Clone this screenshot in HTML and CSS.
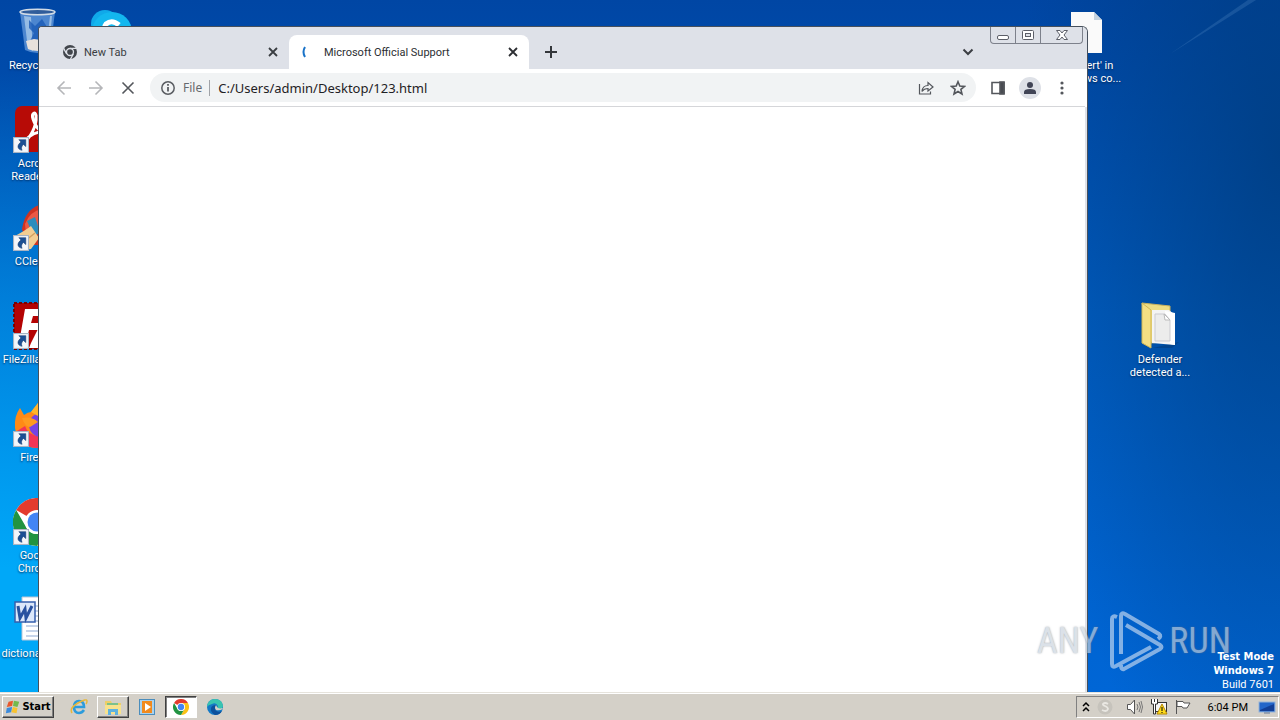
FILE: index.html
```html
<!DOCTYPE html>
<html lang="en">
<head>
<meta charset="utf-8">
<title>Desktop</title>
<link rel="stylesheet" href="styles.css">
</head>
<body>
<svg class="defs" width="0" height="0" aria-hidden="true">
  <defs>
    <symbol id="shortcut" viewBox="0 0 15 15"><rect x=".5" y=".5" width="14" height="14" fill="#f4f6fa" stroke="#a9b4c4"/><path d="M5.500 2.500H12V9L9.800 7C8 8.500 7.500 10.500 8.500 12.500 4.500 12 2.800 8 7.500 4.800z" fill="#1c4f94" stroke="#123a72" stroke-width=".5"/></symbol>
    <symbol id="chrome" viewBox="0 0 48 48"><circle cx="24" cy="24" r="24" fill="#fff"/><path d="M24 24 3.200 12A24 24 0 0 1 44.800 12H24z" fill="#e33b2e"/><path d="M24 12h20.800A24 24 0 0 1 24 48l10.400-18z" fill="#fbc116"/><path d="M3.200 12A24 24 0 0 0 24 48l10.400-18A12 12 0 0 1 13.600 30z" fill="#229342"/><circle cx="24" cy="24" r="12" fill="#fff"/><circle cx="24" cy="24" r="9.500" fill="#4285f4"/></symbol>
    <symbol id="close" viewBox="0 0 16 16"><path d="m4 4 8 8m0-8-8 8" stroke="currentColor" stroke-width="1.800" fill="none"/></symbol>
  </defs>
</svg>
<div class="screen">
  <main class="desktop">
    <svg class="rays" viewBox="0 0 200 130" aria-hidden="true"><path d="M90 54 168 0h8z" fill="#8fc3ee" opacity=".16"/></svg>
    <div class="icons">
      <div class="item"><svg class="pic" viewBox="0 0 48 48"><path d="m7 4 5 38q12 6 25 0l5-38z" fill="#4c86cf"/><path d="m11 8 4 33 5 2-2-34zM37 8l-4 34 3-1 3-33z" fill="#a9c9e8" opacity=".8"/><path d="m16 12 6 6 7-7 5 8-7 6 5 8H17l4-8-5-5z" fill="#1557b4" opacity=".75"/><path d="m13 33 8-2 7 1 8-1-2 10q-9 4-19 0z" fill="#e7e1dc"/><ellipse cx="24.500" cy="4" rx="17.500" ry="2.800" fill="#305d9b" stroke="#d2dce6" stroke-width="1.500"/></svg><span class="label">Recycle Bin</span></div>
      <div class="item"><svg class="pic" viewBox="0 0 48 48"><rect x="2" width="45" height="46" rx="7" fill="#b70b06"/><path d="M12 35c5-3 12-15 11-25 0-5-5-3-3 3 3 9 9 15 17 16 5 0 3-5-4-4-8 0-17 4-21 10z" fill="none" stroke="#fff" stroke-width="3"/><use href="#shortcut" y="31" width="16" height="16"/></svg><span class="label">Acrobat<br>Reader DC</span></div>
      <div class="item"><svg class="pic" viewBox="0 0 48 48"><path d="M9 25Q12 6 26 1h16v40H14z" fill="#cf3321"/><path d="M12 20Q17 7 29 5v14L13 30z" fill="#eb5945"/><path d="m14 17 8-4 5 15-6 5z" fill="#2b8dbd"/><path d="M2 32Q13 26 18 22l8 12-8 11q-10 2-16-9z" fill="#f2cd92"/><path d="m12 37 10-8" stroke="#d0a060" stroke-width="1.500"/><use href="#shortcut" y="31" width="16" height="16"/></svg><span class="label">CCleaner</span></div>
      <div class="item"><svg class="pic" viewBox="0 0 48 48"><rect x="1" y="1" width="46" height="46" fill="#b40303"/><rect x="1" y="1" width="46" height="46" fill="none" stroke="#790000" stroke-width="2" stroke-dasharray="3 2"/><path d="M12 7h28l-2 7H20l-2 7h10l-2 7H16l-3 13H6z" fill="#fff"/><path d="M26 25h20L27 41h15l-2 5H16l2-5z" fill="#fff"/><use href="#shortcut" y="31" width="16" height="16"/></svg><span class="label">FileZilla Client</span></div>
      <div class="item"><svg class="pic" viewBox="0 0 48 48"><path d="M2 28Q1 16 7 8l4 7q4-3 7-3l7-9 22 10v22Q42 48 25 48 5 48 2 28z" fill="#ff8a16"/><path d="M4 31q4 17 21 17h10V35q-19 4-23-9z" fill="#f23556"/><circle cx="28" cy="25" r="12" fill="#7542e5"/><path d="M9 18q10-2 16 4l-8 5q-5 0-8-9z" fill="#ff9a1f"/><path d="m18 12 7-9v13z" fill="#ffb52c"/><use href="#shortcut" y="31" width="16" height="16"/></svg><span class="label">Firefox</span></div>
      <div class="item"><svg class="pic" viewBox="0 0 48 48"><use href="#chrome" width="48" height="48"/><use href="#shortcut" y="31" width="16" height="16"/></svg><span class="label">Google<br>Chrome</span></div>
      <div class="item"><svg class="pic" viewBox="0 0 48 48"><path d="M9 1h31v43H9z" fill="#fff" stroke="#b9c6d7"/><path d="M13 10h22M13 15h22M13 20h22M13 25h22M13 30h22M13 35h22M13 40h22" stroke="#8da9d3"/><rect x="2" y="6" width="20" height="20" fill="#dce8fa" stroke="#365fac" stroke-width="1.500"/><path d="m5 10 2 12 5-9 1 9 6-12" stroke="#2852a0" stroke-width="3" fill="none"/></svg><span class="label">dictionarywe...</span></div>
    </div>
    <svg class="skype" viewBox="0 0 48 48" aria-hidden="true"><circle cx="16" cy="16" r="14" fill="#10a9e9"/><circle cx="23" cy="24" r="20" fill="#13b7ef"/><circle cx="32" cy="32" r="13" fill="#078bd0"/><path d="M30 17q-7-6-13-1c-4 5 2 7 7 8s7 5 2 8-10 0-11-3" stroke="#fff" stroke-width="5" fill="none"/></svg>
    <div class="item item-file"><svg class="pic" viewBox="0 0 48 48"><path d="M8 4h23l8 8v33H8z" fill="#fafafa"/><path d="M31 4v8h8z" fill="#c6d3df"/></svg><span class="label">'An alert' in<br>Windows co...</span></div>
    <div class="item item-folder"><svg class="pic" viewBox="0 0 48 48"><path d="m34 42 9-2-7 6H17z" fill="#082b54" opacity=".3"/><path d="m6 1 28 3v35l-19 2z" fill="#eddc83" stroke="#c7b05d"/><path d="M16 8h17l6 5v30l-23-2z" fill="#f4f4f4"/><path d="m29 9 10 2v32l-5-1z" fill="#fff"/><path d="M19 12h10l5 6v21H19z" fill="#ececec" stroke="#cbcbd0"/><path d="m28 12 1 6h5z" fill="#fff" stroke="#bbb"/><path d="m6 1 9 7v38l-9-5z" fill="#f5df83" stroke="#d1b756"/></svg><span class="label">Defender<br>detected a...</span></div>

    <section class="window" aria-label="Browser">
      <header class="tabstrip">
        <div class="tab"><svg class="favicon" viewBox="0 0 48 48"><circle cx="24" cy="24" r="21" fill="#42464c"/><circle cx="24" cy="24" r="10.500" fill="none" stroke="#dee1e8" stroke-width="4"/><path d="M24 13h20M14 30 5 13M34 30 24 48" stroke="#dee1e8" stroke-width="4"/></svg><span class="tab-title">New Tab</span><button class="tab-close" aria-label="Close New Tab"><svg><use href="#close"/></svg></button></div>
        <div class="tab active"><svg class="favicon" viewBox="0 0 16 16"><path d="M3 3Q0 8 3 13" fill="none" stroke="#1a73c8" stroke-width="2"/></svg><span class="tab-title">Microsoft Official Support</span><button class="tab-close" aria-label="Close Microsoft Official Support"><svg><use href="#close"/></svg></button></div>
        <button class="newtab" aria-label="New tab"><svg viewBox="0 0 16 16"><path d="M8 2v12M2 8h12" stroke="#34373b" stroke-width="2"/></svg></button>
        <button class="tabsearch" aria-label="Search tabs"><svg viewBox="0 0 16 16"><path d="m3.500 5.500 4.500 4.500 4.500-4.500" fill="none" stroke="#3b3e43" stroke-width="2"/></svg></button>
        <div class="controls">
          <button aria-label="Minimize"><svg viewBox="0 0 16 12"><rect x="2.500" y="6.500" width="11" height="4" rx="1.500" fill="#fff" stroke="#5c5f68"/></svg></button>
          <button aria-label="Maximize"><svg viewBox="0 0 16 12"><rect x="2.500" y="1.500" width="11" height="9" rx="1" fill="#fff" stroke="#5c5f68"/><rect x="5.500" y="4.500" width="5" height="3" fill="#dfe2e9" stroke="#5c5f68"/></svg></button>
          <button class="wide" aria-label="Close"><svg viewBox="0 0 16 12"><path d="M2.500 1.500h3.500l2 2.500 2-2.500h3.500L10 6l3.500 4.500H10L8 8l-2 2.500H2.500L6 6z" fill="#fff" stroke="#5c5f68"/></svg></button>
        </div>
      </header>
      <nav class="toolbar" aria-label="Navigation">
        <button class="tool pale" aria-label="Back"><svg viewBox="0 0 16 16"><path d="M15 8H2m6.500-6.500L2 8l6.500 6.500" /></svg></button>
        <button class="tool pale" aria-label="Forward"><svg viewBox="0 0 16 16"><path d="M1 8h13M7.500 1.500 14 8l-6.500 6.500"/></svg></button>
        <button class="tool" aria-label="Stop"><svg viewBox="0 0 16 16"><path d="m2.500 2.500 11 11m0-11-11 11"/></svg></button>
        <div class="omnibox">
          <svg class="info" viewBox="0 0 16 16"><circle cx="8" cy="8" r="6.200" fill="none" stroke="#5a5d62" stroke-width="1.500"/><path d="M8 7v4.500M8 4v1.700" stroke="#5a5d62" stroke-width="1.800"/></svg>
          <label class="scheme" for="url">File</label>
          <input id="url" class="url" type="text" value="C:/Users/admin/Desktop/123.html">
          <button class="tool" aria-label="Share"><svg viewBox="0 0 16 16"><path d="M1.500 4v10h11v-2.500M4 11.500q.5-6 6-6V2.500L15 7l-5 4V8.500q-4 0-6 3z" style="stroke-width:1.200"/></svg></button>
          <button class="tool" aria-label="Bookmark"><svg viewBox="0 0 16 16"><path d="m8 1.700 1.800 4.300 4.700.4-3.600 3 1.100 4.600L8 11.500 4 14l1.100-4.600-3.600-3L6.200 6z"/></svg></button>
        </div>
        <button class="tool" aria-label="Side panel"><svg viewBox="0 0 16 16"><path d="M2 2.500h12v11H2z"/><path d="M10 2h4v12h-4z" style="fill:#494c52"/></svg></button>
        <button class="tool" aria-label="Profile"><svg class="avatar" viewBox="0 0 22 22"><circle cx="11" cy="11" r="11" fill="#dee1e7"/><circle cx="11" cy="8" r="3" fill="#414556"/><path d="M5 17v-2q0-3 6-3t6 3v2z" fill="#414556"/></svg></button>
        <button class="tool" aria-label="Menu"><svg viewBox="0 0 16 16"><g fill="#54575c"><circle cx="8" cy="3" r="1.600"/><circle cx="8" cy="8" r="1.600"/><circle cx="8" cy="13" r="1.600"/></g></svg></button>
      </nav>
      <div class="page"></div>
    </section>

    <div class="watermark"><span>ANY</span><svg viewBox="0 0 56 62"><path d="M8 7Q3 5 3 9v45q0 4 4 2l35-19M12 44V6q0-4 4-2l34 20q3 2-1 5M17 15l34 20q3 2 0 4L15 59q-3 1-3-4"/></svg><span>RUN</span></div>
    <div class="build"><b>Test Mode</b><b>Windows 7</b><span>Build 7601</span></div>
  </main>

  <footer class="taskbar">
    <button class="start"><svg viewBox="0 0 18 16"><path d="m4 2 5-1-1 6-6 1z" fill="#e9582c"/><path d="m10 1 6 1-2 6-5-1z" fill="#73b94d"/><path d="m2 9 6-1-1 6-6 1z" fill="#3c8bdc"/><path d="m9 8 5 1-1 6-6-1z" fill="#f8c331"/></svg>Start</button>
    <div class="quick">
      <button class="task" aria-label="Internet Explorer"><svg viewBox="0 0 18 18"><path d="M14 12q-2 3-5 3-5 0-5-6t5-6q5 0 5 6H5" fill="none" stroke="#2d9cdc" stroke-width="2.600"/><path d="M2 15Q-1 10 8 5t9-2q0 2-1 3" fill="none" stroke="#e8b83a" stroke-width="1.500"/></svg></button>
      <button class="task raised" aria-label="Explorer"><svg viewBox="0 0 18 18"><path d="M1 3h6l1 2h9v11H1z" fill="#edcf68"/><path d="M3 5h11v6H3z" fill="#7cc18b"/><path d="M1 7h16v9H1z" fill="#f8e28d"/><path d="M4 17v-6h10v6h-3v-3H7v3z" fill="#5fb2df"/></svg></button>
      <button class="task" aria-label="Media Player"><svg viewBox="0 0 18 18"><rect x="1.500" y="1.500" width="15" height="15" fill="#a9d2ee" stroke="#4b8dbc"/><rect x="4" y="3" width="10" height="12" fill="#f18a1d"/><path d="m7 5 6 4-6 4z" fill="#fff"/></svg></button>
      <button class="task pressed" aria-label="Google Chrome"><svg viewBox="0 0 18 18"><use href="#chrome" x="1" y="1" width="16" height="16"/></svg></button>
      <button class="task" aria-label="Edge"><svg viewBox="0 0 18 18"><circle cx="9" cy="9" r="8" fill="#1479c6"/><path d="M1 9Q2 1 9 1t8 7q-1 4-6 3l1-3q-2-4-6-2-4 1-5 3z" fill="#39c4b0"/><path d="M10 7q3 5-1 5 3 3 7 1-2 4-7 4-5-3-4-7 1-3 5-3z" fill="#0c509c"/><path d="M10 7q-2 3 0 5 3 1 7-1l-1-1q-4 2-6-3z" fill="#d4d0c8"/></svg></button>
    </div>
    <div class="tray">
      <svg class="t-small" viewBox="0 0 8 12"><path d="m1 5 3-3 3 3M1 10l3-3 3 3" fill="none" stroke="#000" stroke-width="1.500"/></svg>
      <svg class="t-icon skype-tray" viewBox="0 0 18 18"><circle cx="9" cy="9" r="7.500" fill="#c6c3bc"/><path d="M12 6q-3-2-5 0c-1 2 5 2 5 5-1 3-4 2-6 1" fill="none" stroke="#e9e7e2" stroke-width="1.800"/></svg>
      <svg class="t-icon" viewBox="0 0 18 18"><path d="M1.500 6.500h3l4-4.500v14l-4-4.500h-3z" fill="#fff" stroke="#555"/><path d="M11 6q2 3 0 6m2-8q3 5 0 10m2-11q3 6 0 12" fill="none" stroke="#777"/></svg>
      <svg class="t-icon" viewBox="0 0 18 18"><rect x="4.500" y="4.500" width="12" height="9" fill="#f7f7f7" stroke="#333"/><path d="M1.500 1v5h2v10h2V6h2V1M4.500 1v3" fill="#fff" stroke="#333"/><path d="m12 6 5 10H7z" fill="#ffdc1b" stroke="#b68800"/><path d="M12 9v4m0 1v1" stroke="#000"/></svg>
      <svg class="t-icon" viewBox="0 0 18 18"><path d="M2.500 2v14M3 3.500h6l1 1.500h6l-3 5H9L8 8.500H3z" fill="#fff" stroke="#555"/></svg>
      <time class="clock">6:04 PM</time>
      <svg class="t-icon" viewBox="0 0 18 18"><rect x="1" y="4" width="16" height="10" fill="#2366c9" stroke="#96b4d8"/><path d="m2 12 14-6v7H2z" fill="#123f96"/><path d="M6 15h6" stroke="#627795"/></svg>
    </div>
  </footer>
</div>
</body>
</html>
```
FILE: styles.css
```css
* { box-sizing: border-box; }
body { margin: 0; font: 11px/13px Roboto, Tahoma, sans-serif; overflow: hidden; }
button { border: 0; padding: 0; background: none; font: inherit; color: inherit; display: flex; align-items: center; justify-content: center; }
svg { display: block; flex: none; }
.defs { position: absolute; }
.screen { height: 100vh; display: flex; flex-direction: column; }
.desktop {
  position: relative; flex: 1; overflow: hidden;
  background:
    radial-gradient(ellipse 260px 700px at 100% 22%, #003c7ecc, #003c7e00),
    radial-gradient(ellipse 460px 620px at 0 100%, #00a8f8 20%, #00a8f800),
    linear-gradient(#0046a4, #005cc0 45%, #0066d6);
}
.rays { position: absolute; top: 0; right: 0; width: 200px; height: 130px; }
.icons { display: flex; flex-direction: column; width: 74px; padding-top: 8px; }
.item { height: 98px; width: 74px; display: flex; flex-direction: column; align-items: center; gap: 3px; color: #fff; text-align: center; }
.pic { width: 48px; height: 48px; }
.label { white-space: nowrap; text-shadow: 0 1px 2px #00285a; }
.skype { position: absolute; left: 89px; top: 8px; width: 48px; height: 48px; }
.item-file { position: absolute; right: 156px; top: 8px; }
.item-folder { position: absolute; right: 83px; top: 302px; }

.window {
  position: absolute; left: 38px; right: 192px; top: 26px; bottom: 0;
  display: flex; flex-direction: column; background: #fff;
  border: 1px solid #46505c; border-bottom: 0; border-radius: 4px 6px 0 0; overflow: hidden;
}
.tabstrip { position: relative; height: 42px; background: #dee1e8; display: flex; align-items: flex-end; padding-left: 10px; }
.tab { width: 240px; height: 34px; display: flex; align-items: center; padding: 0 8px 0 13px; gap: 6px; color: #3a3d42; }
.tab.active { background: #fff; border-radius: 8px 8px 0 0; color: #2c2e32; }
.favicon { width: 16px; height: 16px; }
.tab-title { flex: 1; white-space: nowrap; }
.tab-close svg { width: 16px; height: 16px; }
.newtab { width: 44px; height: 34px; }
.newtab svg, .tabsearch svg { width: 16px; height: 16px; }
.tabsearch { height: 34px; width: 32px; margin-left: auto; margin-right: 103px; }
.controls { position: absolute; right: 4px; top: 0; display: flex; height: 17px; border: 1px solid #7d818b; border-top: 0; border-radius: 0 0 4px 4px; }
.controls button { width: 25px; border-right: 1px solid #7d818b; }
.controls .wide { width: 41px; border-right: 0; }
.controls svg { width: 16px; height: 12px; }
.toolbar { height: 38px; display: flex; align-items: center; border-bottom: 1px solid #d5d6d9; padding: 0 7px 0 9px; margin-right: 2px; }
.tool { width: 32px; height: 28px; flex: none; }
.tool svg { width: 16px; height: 16px; fill: none; stroke: #54575c; stroke-width: 1.6; }
.tool .avatar { width: 22px; height: 22px; stroke: none; }
.tool g { stroke: none; }
.pale svg { stroke: #b5b6b9; }
.omnibox { flex: 1; min-width: 0; height: 29px; margin: 0 6px; border-radius: 15px; background: #f1f3f4; display: flex; align-items: center; padding: 0 2px 0 10px; }
.info { width: 16px; height: 16px; }
.scheme { font: 12px/16px "Noto Sans", Tahoma, sans-serif; color: #66696e; margin-left: 7px; padding-right: 7px; border-right: 1px solid #a0a3a8; }
.url { flex: 1; min-width: 0; border: 0; padding: 0 0 0 8px; background: none; color: #1f2124; font: 13px/20px "Noto Sans", Tahoma, sans-serif; outline: 0; }
.page { flex: 1; border-right: 2px solid #dee1e8; }

.watermark { position: absolute; right: 49px; bottom: 20px; display: flex; align-items: center; color: #c9d2dc; opacity: .65; font: 36px/62px "Roboto Condensed", "Liberation Sans Narrow", "Liberation Sans", sans-serif; text-shadow: 0 0 2px #6c7580; }
.watermark svg { width: 56px; height: 62px; margin: 0 4px 0 11px; fill: none; stroke: #c9dcf2; stroke-width: 4; }
.build { position: absolute; right: 6px; bottom: 0; display: flex; flex-direction: column; align-items: flex-end; color: #fff; line-height: 14px; }
.build b { font: bold 11px/14px "DejaVu Sans Condensed", "Noto Sans", sans-serif; }
.build span { line-height: 14px; }

.taskbar { height: 28px; background: #d4d0c8; border-top: 1px solid #e6e3dc; box-shadow: inset 0 1px #fff; display: flex; align-items: center; padding: 1px 1px 0 2px; }
.start { height: 22px; width: 52px; gap: 1px; font: bold 11px/14px "DejaVu Sans Condensed", "Noto Sans", sans-serif; color: #000; border: 1px solid; border-color: #fff #404040 #404040 #fff; box-shadow: inset -1px -1px #808080; }
.start svg { width: 16px; height: 16px; }
.quick { display: flex; gap: 2px; margin-left: 9px; }
.task { width: 32px; height: 22px; border: 1px solid transparent; }
.task svg { width: 18px; height: 18px; }
.raised { border-color: #fff #404040 #404040 #fff; box-shadow: inset -1px -1px #808080; }
.pressed { background: #fff; border-color: #404040 #fff #fff #404040; box-shadow: inset 1px 1px #808080; }
.tray { margin-left: auto; height: 22px; display: flex; align-items: center; gap: 6px; padding: 0 2px 0 5px; border: 1px solid; border-color: #808080 #fff #fff #808080; color: #000; }
.t-small { width: 8px; height: 12px; }
.t-icon { width: 18px; height: 18px; }
.skype-tray { margin-right: 6px; }
.clock { margin: 0 4px 0 10px; white-space: nowrap; }
```
